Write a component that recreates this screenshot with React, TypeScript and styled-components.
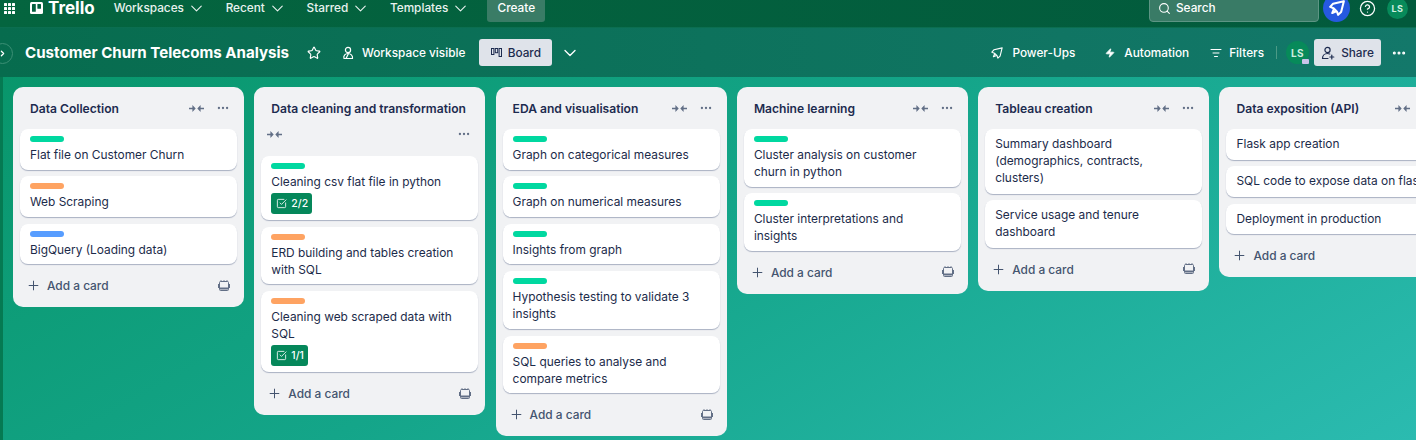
import React from "react";
import styled, { createGlobalStyle } from "styled-components";
import {
  ChevronDown,
  ChevronRight,
  CircleHelp,
  Ellipsis,
  ListFilter,
  Plus,
  Search,
  SquareCheckBig,
  Star,
  Zap,
} from "lucide-react";

const GlobalStyle = createGlobalStyle`
  html, body {
    margin: 0;
    padding: 0;
    height: 440px;
    overflow: hidden;
    font-family: Inter, "Liberation Sans", sans-serif;
  }
`;

const Page = styled.div`
  width: 1416px;
  height: 440px;
  display: flex;
  flex-direction: column;
  overflow: hidden;
  background: linear-gradient(150deg, #079467 0%, #14a589 50%, #2bbbb0 100%);
`;

/* the screenshot cuts the top of the nav bar, hence the negative margin */
const TopBar = styled.header`
  height: 39px;
  margin-top: -11px;
  flex: none;
  display: flex;
  align-items: center;
  padding: 0 8px 0 4px;
  box-sizing: border-box;
  background: linear-gradient(90deg, #04653f, #025a3c);
  border-bottom: 1px solid #0b6e50;
  color: #fff;
`;

const Logo = styled.div`
  display: flex;
  align-items: center;
  gap: 5px;
  margin: 0 19px 0 15px;
  font-size: 17px;
  line-height: 14px;
  font-weight: 700;
`;

const NavList = styled.nav`
  display: flex;
  gap: 19.7px;
`;

const NavItem = styled.div`
  display: flex;
  align-items: center;
  gap: 3px;
  font-size: 11.8px;
  font-weight: 500;
  color: #e8f2ee;
`;

const CreateButton = styled.div`
  width: 58px;
  height: 28px;
  margin-left: 17px;
  border-radius: 3px;
  background: #3a7c66;
  display: flex;
  align-items: center;
  justify-content: center;
  font-size: 11.8px;
  font-weight: 500;
`;

const TopRight = styled.div`
  margin-left: auto;
  display: flex;
  align-items: center;
`;

const SearchBox = styled.div`
  width: 170px;
  height: 28px;
  box-sizing: border-box;
  border: 1px solid #5d9584;
  border-radius: 4px;
  background: #397b66;
  display: flex;
  align-items: center;
  gap: 5px;
  padding-left: 8px;
  font-size: 11.8px;
  font-weight: 500;
`;

const NotifyBubble = styled.div`
  width: 27px;
  height: 28px;
  margin-left: 4px;
  border-radius: 50%;
  background: #2659e0;
  display: flex;
  align-items: center;
  justify-content: center;
`;

const HelpWrap = styled.div`
  display: flex;
  margin: 0 11px 0 9px;
`;

const Avatar = styled.div<{ $size: number }>`
  width: ${(p) => p.$size}px;
  height: ${(p) => p.$size}px;
  position: relative;
  border-radius: 50%;
  background: #078a5a;
  color: #cfeee0;
  display: flex;
  align-items: center;
  justify-content: center;
  font-size: ${(p) => (p.$size > 21 ? 10 : 9)}px;
  font-weight: 700;
  letter-spacing: 0.5px;
`;

const BoardBar = styled.div`
  height: 49px;
  flex: none;
  display: flex;
  align-items: center;
  padding: 0 9px 0 25px;
  box-sizing: border-box;
  background: linear-gradient(90deg, #076c4e, #13786a);
  color: #fff;
  position: relative;
`;

const SidebarToggle = styled.div`
  position: absolute;
  left: -8px;
  top: 15px;
  width: 21px;
  height: 21px;
  box-sizing: border-box;
  border-radius: 50%;
  border: 1px solid #3b8f75;
  display: flex;
  align-items: center;
  justify-content: center;
`;

const BoardTitle = styled.h1`
  margin: 0;
  font-size: 15.1px;
  font-weight: 700;
  white-space: nowrap;
`;

const BarItem = styled.div<{ $left?: number; $gap?: number }>`
  display: flex;
  align-items: center;
  gap: ${(p) => p.$gap ?? 7}px;
  margin-left: ${(p) => p.$left ?? 0}px;
  font-size: 11.8px;
  font-weight: 500;
  white-space: nowrap;
`;

const LightButton = styled.div<{ $left: number; $width: number }>`
  width: ${(p) => p.$width}px;
  height: 27px;
  margin-left: ${(p) => p.$left}px;
  border-radius: 3px;
  background: #dfe3ea;
  color: #1d2b4f;
  display: flex;
  align-items: center;
  justify-content: center;
  gap: 6px;
  font-size: 11.8px;
  font-weight: 500;
`;

const BarRight = styled.div`
  margin-left: auto;
  display: flex;
  align-items: center;
`;

const Divider = styled.div`
  width: 1px;
  height: 13px;
  margin: 0 9px 0 12px;
  background: #4c9a86;
`;

const AvatarBadge = styled.div`
  position: absolute;
  right: 0;
  bottom: 0;
  width: 7px;
  height: 5px;
  border-radius: 1px;
  background: #c9c3ea;
`;

const Canvas = styled.main`
  flex: 1;
  display: flex;
  align-items: flex-start;
  gap: 10.3px;
  padding: 10px 0 0 10px;
  border-left: 3px solid #057a52;
  box-sizing: border-box;
  overflow: hidden;
`;

const ListCard = styled.section`
  width: 231px;
  flex: none;
  box-sizing: border-box;
  padding: 0 7px;
  border-radius: 10px;
  background: #f1f2f4;
`;

const ListHeader = styled.div<{ $wrap: boolean }>`
  height: ${(p) => (p.$wrap ? 69 : 42)}px;
  padding: ${(p) => (p.$wrap ? "14px" : "0")} 0 0 10px;
  display: flex;
  flex-wrap: ${(p) => (p.$wrap ? "wrap" : "nowrap")};
  align-items: center;
  align-content: ${(p) => (p.$wrap ? "flex-start" : "center")};
  justify-content: space-between;
  box-sizing: border-box;
`;

const ListTitle = styled.h2`
  margin: 0;
  font-size: 12.1px;
  line-height: 15px;
  font-weight: 600;
  color: #1d2b4f;
  white-space: nowrap;
`;

const HeaderTools = styled.div<{ $wrap: boolean }>`
  display: flex;
  align-items: center;
  justify-content: space-between;
  color: #626f86;
  width: ${(p) => (p.$wrap ? "calc(100% - 3px)" : "41px")};
  margin: ${(p) => (p.$wrap ? "11px 7px 0 -4px" : "0 7px 0 0")};
`;

const CardStack = styled.div`
  display: flex;
  flex-direction: column;
  gap: 6.9px;
`;

const TaskCard = styled.article<{ $labelled: boolean }>`
  box-sizing: border-box;
  padding: ${(p) => (p.$labelled ? "7px 12px 6.5px 10px" : "6px 12px 7.5px 10px")};
  border-radius: 8px;
  background: #fff;
  box-shadow: 0 1px 1px #a9b1c2;
  color: #1c2b4a;
  font-size: 11.9px;
  line-height: 17px;
`;

const Label = styled.div<{ $color: string }>`
  width: 34px;
  height: 6px;
  margin-bottom: 4px;
  border-radius: 3px;
  background: ${(p) => p.$color};
`;

const Checklist = styled.div`
  width: fit-content;
  display: flex;
  align-items: center;
  gap: 4px;
  height: 20.5px;
  margin-top: 3px;
  padding: 0 4px 0 5px;
  border-radius: 3px;
  background: #05875a;
  color: #fff;
  font-size: 10.5px;
  font-weight: 500;
`;

const ListFooter = styled.div`
  height: 43px;
  display: flex;
  align-items: center;
  gap: 6px;
  padding: 0 7px 0 6px;
  color: #44546f;
  font-size: 11.9px;
  font-weight: 500;
`;

const TemplateIconWrap = styled.div`
  margin-left: auto;
  display: flex;
`;

const CollapseIcon = () => (
  <svg width="15" height="9" viewBox="0 0 15 9" fill="currentColor">
    <path d="M0 3.7h3.4V1l3.3 3.5L3.4 8V5.3H0zM15 3.7h-3.4V1L8.3 4.5 11.6 8V5.3H15z" />
  </svg>
);

const TemplateIcon = () => (
  <svg width="12" height="12" viewBox="0 0 12 12" fill="none" stroke="#626f86" strokeWidth="1">
    <rect x="1.5" y="1.5" width="9" height="9" rx="1" />
    <path d="M0.5 4v4M11.5 4v4" />
    <path d="M3 0.2v1.4M6 0.2v1.4M9 0.2v1.4" />
    <path d="M2 8.5h8" strokeWidth="2" />
  </svg>
);

const TrelloMark = () => (
  <svg width="13" height="12" viewBox="0 0 13 12">
    <rect width="13" height="12" rx="1.5" fill="#fff" />
    <rect x="2" y="2" width="3.8" height="7.8" rx="0.5" fill="#04603f" />
    <rect x="7.4" y="2" width="3.6" height="4.8" rx="0.5" fill="#04603f" />
  </svg>
);

const GridDots = () => (
  <svg width="11" height="11" viewBox="0 0 11 11" fill="#fff">
    {[0, 4, 8].flatMap((y) =>
      [0, 4, 8].map((x) => <rect key={`${x}-${y}`} x={x} y={y} width="3" height="3" rx="0.5" />)
    )}
  </svg>
);

const BoardIcon = () => (
  <svg width="11" height="9" viewBox="0 0 11 9" fill="none" stroke="#1d2b4f" strokeWidth="1">
    <rect x="0.5" y="0.5" width="2.4" height="6" />
    <rect x="4.3" y="0.5" width="2.4" height="4.2" />
    <rect x="8.1" y="0.5" width="2.4" height="8" />
  </svg>
);

const PowerUpIcon = ({ size, weight }: { size: number; weight: number }) => (
  <svg width={size} height={size} viewBox="0 0 14 14" fill="none" stroke="#fff" strokeWidth={weight} strokeLinejoin="round">
    <path d="M13 1 3.6 3.2 1 6l3 1.2L7 10.2 8 13l2.6-2.4z" />
    <path d="M4.4 7.6 2.8 11.4 6.4 9.8" />
  </svg>
);

const WorkspaceIcon = () => (
  <svg width="14" height="14" viewBox="0 0 14 14" fill="none" stroke="#fff" strokeWidth="1.2">
    <circle cx="7" cy="4" r="2.6" />
    <path d="M3 12.5h8.5c.6-2.8-2-5-4.5-5s-5 2.2-4 5z" />
    <path d="M5 12.5 7.5 7.5" />
  </svg>
);

const ShareIcon = () => (
  <svg width="14" height="14" viewBox="0 0 14 14" fill="none" stroke="#1d2b4f" strokeWidth="1.2" strokeLinecap="round">
    <circle cx="6.5" cy="4" r="2.6" />
    <path d="M1.5 12.5c0-3 2.2-5 5-5 .8 0 1.5.2 2.2.5M1.5 12.5h5.5M10.8 9v4M8.8 11h4" />
  </svg>
);

type Task = { text: string; label?: string; check?: string };
type Column = { title: string; tasks: Task[] };

const GREEN = "#00d8a0";
const ORANGE = "#fea362";
const BLUE = "#579dff";

const columns: Column[] = [
  {
    title: "Data Collection",
    tasks: [
      { text: "Flat file on Customer Churn", label: GREEN },
      { text: "Web Scraping", label: ORANGE },
      { text: "BigQuery (Loading data)", label: BLUE },
    ],
  },
  {
    title: "Data cleaning and transformation",
    tasks: [
      { text: "Cleaning csv flat file in python", label: GREEN, check: "2/2" },
      { text: "ERD building and tables creation with SQL", label: ORANGE },
      { text: "Cleaning web scraped data with SQL", label: ORANGE, check: "1/1" },
    ],
  },
  {
    title: "EDA and visualisation",
    tasks: [
      { text: "Graph on categorical measures", label: GREEN },
      { text: "Graph on numerical measures", label: GREEN },
      { text: "Insights from graph", label: GREEN },
      { text: "Hypothesis testing to validate 3 insights", label: GREEN },
      { text: "SQL queries to analyse and compare metrics", label: ORANGE },
    ],
  },
  {
    title: "Machine learning",
    tasks: [
      { text: "Cluster analysis on customer churn in python", label: GREEN },
      { text: "Cluster interpretations and insights", label: GREEN },
    ],
  },
  {
    title: "Tableau creation",
    tasks: [
      { text: "Summary dashboard (demographics, contracts, clusters)" },
      { text: "Service usage and tenure dashboard" },
    ],
  },
  {
    title: "Data exposition (API)",
    tasks: [
      { text: "Flask app creation" },
      { text: "SQL code to expose data on flask" },
      { text: "Deployment in production" },
    ],
  },
];

const navItems = ["Workspaces", "Recent", "Starred", "Templates"];

export default function App() {
  return (
    <Page>
      <GlobalStyle />
      <TopBar>
        <GridDots />
        <Logo>
          <TrelloMark />
          Trello
        </Logo>
        <NavList>
          {navItems.map((item) => (
            <NavItem key={item}>
              {item}
              <ChevronDown size={19} strokeWidth={1.4} />
            </NavItem>
          ))}
        </NavList>
        <CreateButton>Create</CreateButton>
        <TopRight>
          <SearchBox>
            <Search size={13} />
            Search
          </SearchBox>
          <NotifyBubble>
            <PowerUpIcon size={16} weight={1.8} />
          </NotifyBubble>
          <HelpWrap>
            <CircleHelp size={17} strokeWidth={1.8} />
          </HelpWrap>
          <Avatar $size={21}>LS</Avatar>
        </TopRight>
      </TopBar>
      <BoardBar>
        <SidebarToggle>
          <ChevronRight size={9} strokeWidth={3.5} />
        </SidebarToggle>
        <BoardTitle>Customer Churn Telecoms Analysis</BoardTitle>
        <BarItem $left={18}>
          <Star size={14} />
        </BarItem>
        <BarItem $left={20}>
          <WorkspaceIcon />
          Workspace visible
        </BarItem>
        <LightButton $left={14} $width={73}>
          <BoardIcon />
          Board
        </LightButton>
        <BarItem $left={8}>
          <ChevronDown size={20} strokeWidth={1.6} />
        </BarItem>
        <BarRight>
          <BarItem $gap={9}>
            <PowerUpIcon size={12} weight={1.3} />
            Power-Ups
          </BarItem>
          <BarItem $left={30} $gap={9}>
            <Zap size={10} fill="#fff" />
            Automation
          </BarItem>
          <BarItem $left={21}>
            <ListFilter size={12} />
            Filters
          </BarItem>
          <Divider />
          <Avatar $size={23}>
            LS
            <AvatarBadge />
          </Avatar>
          <LightButton $left={5} $width={67}>
            <ShareIcon />
            Share
          </LightButton>
          <BarItem $left={10}>
            <Ellipsis size={16} strokeWidth={2.6} />
          </BarItem>
        </BarRight>
      </BoardBar>
      <Canvas>
        {columns.map((col) => {
          const wrap = col.title.length > 25;
          return (
            <ListCard key={col.title}>
              <ListHeader $wrap={wrap}>
                <ListTitle>{col.title}</ListTitle>
                <HeaderTools $wrap={wrap}>
                  <CollapseIcon />
                  <Ellipsis size={14} />
                </HeaderTools>
              </ListHeader>
              <CardStack>
                {col.tasks.map((task) => (
                  <TaskCard key={task.text} $labelled={!!task.label}>
                    {task.label && <Label $color={task.label} />}
                    {task.text}
                    {task.check && (
                      <Checklist>
                        <SquareCheckBig size={11} strokeWidth={1.8} />
                        {task.check}
                      </Checklist>
                    )}
                  </TaskCard>
                ))}
              </CardStack>
              <ListFooter>
                <Plus size={15} strokeWidth={1.6} />
                Add a card
                <TemplateIconWrap>
                  <TemplateIcon />
                </TemplateIconWrap>
              </ListFooter>
            </ListCard>
          );
        })}
      </Canvas>
    </Page>
  );
}
